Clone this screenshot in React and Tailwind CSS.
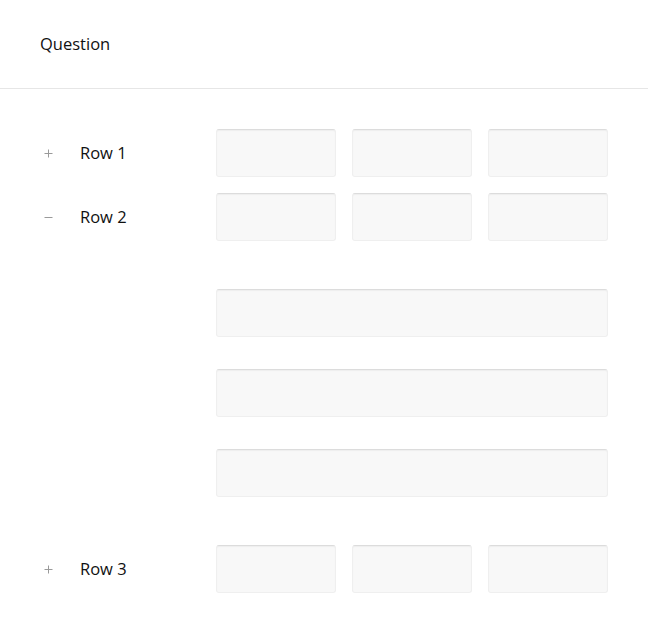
import React from "react";

function Cell({ wide }) {
  return (
    <div
      className={`h-12 ${wide ? "w-[392px]" : "w-[120px]"} rounded-[3px] bg-[#f8f8f8] border border-[#efefef] border-t-[#dcdcdc] shadow-[inset_0_1px_1px_rgba(0,0,0,0.04)]`}
    />
  );
}

function Row({ label, open }) {
  return (
    <div className="flex items-center">
      <div className="flex items-center w-[176px]">
        <span className="w-4 flex justify-center">
          {open ? (
            <svg width="9" height="9" viewBox="0 0 9 9">
              <path d="M0.5 4.5h8" stroke="#9a9a9a" strokeWidth="1" />
            </svg>
          ) : (
            <svg width="9" height="9" viewBox="0 0 9 9">
              <path d="M0.5 4.5h8M4.5 0.5v8" stroke="#9a9a9a" strokeWidth="1" />
            </svg>
          )}
        </span>
        <span className="ml-6 text-[16.5px] text-[#111111]">{label}</span>
      </div>
      <div className="flex gap-4">
        <Cell />
        <Cell />
        <Cell />
      </div>
    </div>
  );
}

export default function App() {
  return (
    <div
      className="w-[648px] h-[633px] bg-white rounded-[6px] overflow-hidden"
      style={{ fontFamily: '"Open Sans", "Noto Sans", sans-serif' }}
    >
      <div className="h-[89px] flex items-center px-10 border-b border-[#e6e6e6]">
        <span className="text-[16.5px] text-[#111111]">Question</span>
      </div>
      <div className="px-10 pt-10 flex flex-col gap-4">
        <Row label="Row 1" />
        <div className="flex flex-col">
          <Row label="Row 2" open />
          <div className="flex flex-col gap-8 pl-[176px] py-12">
            <Cell wide />
            <Cell wide />
            <Cell wide />
          </div>
        </div>
        <div className="-mt-4">
          <Row label="Row 3" />
        </div>
      </div>
    </div>
  );
}
